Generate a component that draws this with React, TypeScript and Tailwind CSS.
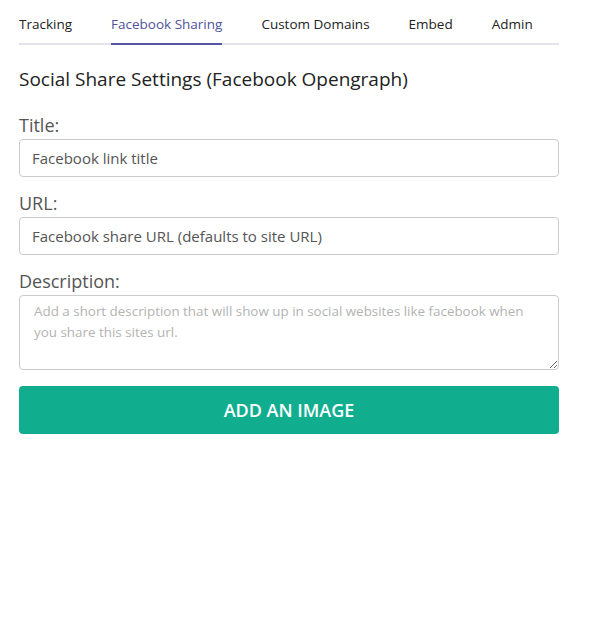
import { useState } from 'react'

const tabs = ['Tracking', 'Facebook Sharing', 'Custom Domains', 'Embed', 'Admin']

export default function App() {
  const [active, setActive] = useState('Facebook Sharing')

  return (
    <div className="min-h-screen bg-white font-['Open_Sans',sans-serif] text-[#333]">
      <div className="w-[540px] ml-[19px] pt-[14px]">
        {/* Tabs */}
        <div className="flex gap-[39px] border-b-2 border-[#e3e5ea]">
          {tabs.map(t => (
            <button
              key={t}
              onClick={() => setActive(t)}
              className={`-mb-[2px] pb-[9px] text-[13.5px] leading-[20px] border-b-2 ${
                t === active ? 'text-[#4f529c] border-[#5558a5]' : 'text-[#222] border-transparent'
              }`}
            >
              {t}
            </button>
          ))}
        </div>

        <h2 className="mt-[22px] text-[19px] leading-[24px] text-[#222]">
          Social Share Settings (Facebook Opengraph)
        </h2>

        <label className="block mt-[23px] text-[18px] leading-[22px] text-[#555]">Title:</label>
        <input
          className="block w-full h-[38px] mt-[3px] rounded-[4px] border border-[#ccc] px-[12px] text-[15px] text-[#555] placeholder:text-[#555] outline-none"
          placeholder="Facebook link title"
        />

        <label className="block mt-[15px] text-[18px] leading-[22px] text-[#555]">URL:</label>
        <input
          className="block w-full h-[38px] mt-[3px] rounded-[4px] border border-[#ccc] px-[12px] text-[15px] text-[#555] placeholder:text-[#555] outline-none"
          placeholder="Facebook share URL (defaults to site URL)"
        />

        <label className="block mt-[15px] text-[18px] leading-[22px] text-[#555]">Description:</label>
        <textarea
          className="block w-full h-[75px] mt-[3px] rounded-[4px] border border-[#ccc] px-[14px] py-[5px] text-[13.4px] leading-[21px] text-[#555] placeholder:text-[#b3b3b3] outline-none resize-y"
          placeholder="Add a short description that will show up in social websites like facebook when you share this sites url."
        />

        <button className="block w-full h-[48px] mt-[16px] rounded-[4px] bg-[#10ae8f] text-white text-[18px] font-semibold uppercase">
          Add an image
        </button>
      </div>
    </div>
  )
}
